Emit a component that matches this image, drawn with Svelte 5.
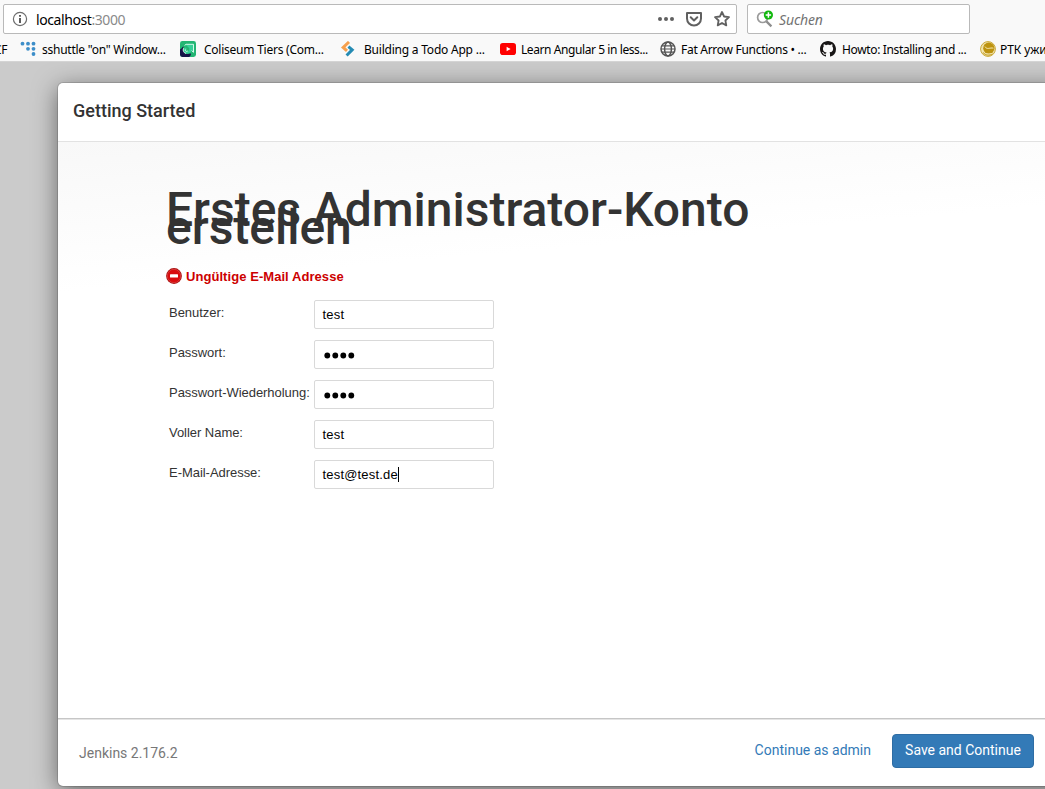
<script>
  const bookmarks = [
    { icon: 'dots', text: 'sshuttle "on" Window...', lead: 6, spacing: -0.25 },
    { icon: 'arrow', text: 'Coliseum Tiers (Com...', lead: 8, spacing: -0.24 },
    { icon: 'todo', text: 'Building a Todo App ...', lead: 8, spacing: -0.22 },
    { icon: 'youtube', text: 'Learn Angular 5 in less...', lead: 5, spacing: -0.42 },
    { icon: 'globe', text: 'Fat Arrow Functions • ...', lead: 5, spacing: -0.28 },
    { icon: 'github', text: 'Howto: Installing and ...', lead: 6, spacing: -0.35 },
    { icon: 'coin', text: 'РТК ужин', lead: 4, spacing: -0.1 }
  ];
  const fields = [
    { label: 'Benutzer:', value: 'test' },
    { label: 'Passwort:', value: '••••', secret: true },
    { label: 'Passwort-Wiederholung:', value: '••••', secret: true },
    { label: 'Voller Name:', value: 'test' },
    { label: 'E-Mail-Adresse:', value: 'test@test.de', focused: true }
  ];
</script>

<div class="window">
  <header class="chrome">
    <div class="nav">
      <div class="address">
        <svg class="info" width="16" height="16" viewBox="0 0 16 16">
          <circle cx="8" cy="8" r="6.6" fill="none" stroke="#6d6d6d" stroke-width="1.2" />
          <path d="M7 4h2v1.8H7zM7 7h2v5H7z" fill="#5c5c5c" />
        </svg>
        <span class="url">localhost<span class="port">:3000</span></span>
        <div class="actions">
          <svg width="18" height="18" viewBox="0 0 18 18" fill="#606060">
            <circle cx="3" cy="9" r="2" /><circle cx="9" cy="9" r="2" /><circle cx="15" cy="9" r="2" />
          </svg>
          <svg width="18" height="18" viewBox="0 0 18 18" fill="none" stroke="#606060" stroke-width="2" stroke-linecap="round" stroke-linejoin="round">
            <path d="M2 3h14v5.5a7 7 0 0 1-14 0z" /><path d="M5.7 7.3 9 10.5l3.3-3.2" />
          </svg>
          <svg width="18" height="18" viewBox="0 0 18 18" fill="none" stroke="#606060" stroke-width="1.8" stroke-linejoin="round">
            <path d="m9 2 2.1 4.5 4.9.6-3.6 3.4.9 4.9L9 13l-4.3 2.4.9-4.9L2 7.1l4.9-.6z" />
          </svg>
        </div>
      </div>
      <div class="search">
        <svg width="18" height="18" viewBox="0 0 18 18">
          <circle cx="6.6" cy="7.5" r="5" fill="none" stroke="#9a9a9a" stroke-width="1.7" />
          <path d="m10.4 11.4 5 5" stroke="#8d8d8d" stroke-width="2.2" />
          <circle cx="12.4" cy="5" r="4.6" fill="#12b80e" />
          <path d="M12.4 2.3v5.4M9.7 5h5.4" stroke="#fff" stroke-width="1.5" />
        </svg>
        <span>Suchen</span>
      </div>
    </div>

    <div class="bookmarks">
      <span class="cut">CF</span>
      {#each bookmarks as b}
        <div class="bookmark">
          <svg width="16" height="16" viewBox="0 0 16 16">
            {#if b.icon === 'dots'}
              <g fill="#3d8ec9">
                <circle cx="2.5" cy="2.7" r="1.9" /><circle cx="8" cy="2.7" r="1.9" /><circle cx="13.5" cy="2.7" r="1.9" />
                <circle cx="8" cy="7.8" r="1.9" /><circle cx="13.5" cy="7.8" r="1.9" /><circle cx="13.5" cy="13" r="1.9" />
              </g>
            {:else if b.icon === 'arrow'}
              <rect width="16" height="16" rx="2.4" fill="#22b573" />
              <path d="M0 8c1 1 2-2 3.5-2.5L3 9l3 4 5-.5c0 2-1 3-2 3.5H2.4A2.4 2.4 0 0 1 0 13.6z" fill="#171347" />
              <path d="M5.2 3.3h8.3v8l-1.9-1.7c-.8 2.6-3.6 3.8-5.8 2.9-2.7-1.1-3-4.8-.4-6.1L7 7.9c-1.6.6-1.5 2.4-.1 2.5 1.7.1 3-1.7 2.2-3.4z" fill="#35cf97" />
              <path d="m4.6 4.4 1.5-1.1h7.4v8l-1.9-1.7M3.5 7.2c-1 2.4.2 4.8 2.5 5.2M5.4 8.5c-.5 1.6 1 2.3 2.4 1.5" fill="none" stroke="#e8fff5" stroke-width=".9" />
            {:else if b.icon === 'todo'}
              <path d="M9 1 3.2 6.4 7 9.8" fill="none" stroke="#f6a04d" stroke-width="3" />
              <path d="m8.4 5.6 3.8 3.2L6.6 14.5" fill="none" stroke="#258bb3" stroke-width="3" />
            {:else if b.icon === 'youtube'}
              <rect y="2" width="16" height="12" rx="2.8" fill="#f00" />
              <path d="m6.6 5.8 4 2.2-4 2.2z" fill="#fff" />
            {:else if b.icon === 'globe'}
              <g fill="none" stroke="#555" stroke-width="1.5">
                <circle cx="8" cy="8" r="7" /><ellipse cx="8" cy="8" rx="3.4" ry="7" />
                <path d="M2 4.8h12M1 8h14M2 11.2h12" stroke-width="1.2" />
              </g>
            {:else if b.icon === 'github'}
              <path fill="#181616" d="M8 0C3.58 0 0 3.58 0 8c0 3.54 2.29 6.53 5.47 7.59.4.07.55-.17.55-.38 0-.19-.01-.82-.01-1.49-2.01.37-2.53-.49-2.69-.94-.09-.23-.48-.94-.82-1.13-.28-.15-.68-.52-.01-.53.63-.01 1.08.58 1.23.82.72 1.21 1.87.87 2.33.66.07-.52.28-.87.51-1.07-1.78-.2-3.64-.89-3.64-3.95 0-.87.31-1.59.82-2.15-.08-.2-.36-1.02.08-2.12 0 0 .67-.21 2.2.82.64-.18 1.32-.27 2-.27s1.36.09 2 .27c1.53-1.04 2.2-.82 2.2-.82.44 1.1.16 1.92.08 2.12.51.56.82 1.27.82 2.15 0 3.07-1.87 3.75-3.65 3.95.29.25.54.73.54 1.48 0 1.07-.01 1.93-.01 2.2 0 .21.15.46.55.38A8.01 8.01 0 0 0 16 8c0-4.42-3.58-8-8-8z" />
            {:else}
              <circle cx="8" cy="8" r="7.4" fill="#f1e3ac" stroke="#cba938" stroke-width="1" />
              <circle cx="8.8" cy="7.2" r="5.6" fill="#bd9310" />
              <path d="M5 5.6c2 3.6 5 .6 8.4 1.6M1.6 7.5c1 4.5 5.5 6.7 10 5" fill="none" stroke="#f7e9b2" stroke-width="1" />
              <path d="M3 11.5c2.6 3 6.5 3.3 9.5 1.5" fill="none" stroke="#c09a20" stroke-width="1" />
            {/if}
          </svg>
          <span style="margin-left: {b.lead}px; letter-spacing: {b.spacing}px">{b.text}</span>
        </div>
      {/each}
    </div>
  </header>

  <main class="backdrop">
    <section class="dialog">
      <div class="title">Getting Started</div>
      <div class="content">
        <h1>Erstes Administrator-Konto<br />erstellen</h1>
        <div class="error">
          <svg width="16" height="16" viewBox="0 0 16 16">
            <circle cx="8" cy="8" r="7.9" fill="#a80f0f" />
            <circle cx="8" cy="8" r="6.7" fill="#d90b0d" stroke="#e04848" stroke-width=".7" />
            <rect x="4" y="6.2" width="8" height="3.2" rx=".5" fill="#fff" />
          </svg>
          <span>Ungültige E-Mail Adresse</span>
        </div>
        <div class="form">
          {#each fields as f}
            <div class="row">
              <span class="label">{f.label}</span>
              <div class="input">
                {#if f.secret}
                  <svg width="34" height="8" viewBox="0 0 34 8">
                    <circle cx="4.3" cy="4.5" r="2.9" /><circle cx="12.3" cy="4.5" r="2.9" /><circle cx="20.3" cy="4.5" r="2.9" /><circle cx="28.3" cy="4.5" r="2.9" />
                  </svg>
                {:else}
                  <span>{f.value}</span>
                {/if}
                {#if f.focused}<i class="caret"></i>{/if}
              </div>
            </div>
          {/each}
        </div>
      </div>
      <footer>
        <span class="version">Jenkins 2.176.2</span>
        <span class="link">Continue as admin</span>
        <button>Save and Continue</button>
      </footer>
    </section>
  </main>
</div>

<style>
  :global(body) { margin: 0; overflow: hidden; }
  .window {
    width: 1045px; height: 789px; overflow: hidden;
    display: flex; flex-direction: column;
    font-family: Roboto, sans-serif; color: #333;
  }
  .window * { box-sizing: border-box; }
  svg { display: block; flex: none; }
  .chrome {
    height: 62px; flex: none; background: #f9f9f9; border-bottom: 1px solid #d4d4d4;
    padding-top: 4px; font-family: "Noto Sans", "Open Sans", sans-serif; color: #000;
  }
  .nav { display: flex; gap: 10px; padding-left: 3px; }
  .address, .search {
    height: 30px; background: #fff; border: 1px solid #b9b9b9; border-radius: 2px;
    display: flex; align-items: center;
  }
  .address { width: 734px; padding: 0 5px 0 8px; }
  .url { margin-left: 8px; font-size: 14px; letter-spacing: -.42px; }
  .port { color: #8a8a8a; }
  .actions { margin-left: auto; display: flex; gap: 10px; }
  .search { width: 223px; padding-left: 8px; font-size: 14px; font-style: italic; color: #737373; }
  .search span { margin-left: 5px; letter-spacing: -.15px; }
  .bookmarks { display: flex; height: 27px; padding-top: 3px; align-items: center; font-size: 12px; white-space: nowrap; }
  .cut { width: 20px; flex: none; margin-left: -6px; margin-right: 6px; padding-top: 1px; letter-spacing: -.3px; }
  .bookmark { width: 160px; flex: none; display: flex; align-items: center; }
  .bookmark span { padding-top: 1px; }
  .backdrop { flex: 1; background: #cbcbcb; padding: 21px 0 0 58px; overflow: hidden; }
  .dialog {
    width: 1010px; height: 703px; background: #fff; border-radius: 5px;
    box-shadow: 0 0 0 1px rgba(0,0,0,.13), 0 5px 24px rgba(0,0,0,.5);
    display: flex; flex-direction: column;
  }
  .title {
    height: 59px; border-bottom: 1px solid #e2e2e2; padding: 0 15px 3px;
    display: flex; align-items: center; font-size: 18px; font-weight: 500;
  }
  .content {
    flex: 1; padding: 59px 0 0 108px;
    background: linear-gradient(175deg, #f8f8f8, #fff 150px);
  }
  h1 { margin: 0; font-size: 48px; line-height: 18px; font-weight: 500; white-space: nowrap; letter-spacing: -.02px; }
  .error {
    margin-top: 31px; height: 17px; display: flex; align-items: flex-start; gap: 4px;
    font: bold 13px/17px "Liberation Sans", Arial, sans-serif; letter-spacing: .06px; color: #c00;
  }
  .form { margin-top: 15px; font: 13px "Liberation Sans", Arial, sans-serif; }
  .row { display: flex; height: 40px; }
  .label { width: 148px; padding: 5px 0 0 3px; white-space: nowrap; letter-spacing: -.04px; }
  .input {
    width: 180px; height: 29px; border: 1px solid #d9d9d9; border-radius: 2px; background: #fff;
    display: flex; align-items: center; padding: 0 7.5px; color: #000; letter-spacing: .18px;
  }
  .caret { width: 1px; height: 15px; background: #000; }
  footer {
    height: 68px; flex: none; border-top: 1px solid #c6c6c6; box-shadow: inset 0 1px #e5e5e5;
    display: flex; align-items: center; padding: 0 34px 3px 21px; font-size: 14px;
  }
  .version { color: #777; padding-top: 3px; }
  .link { margin-left: auto; color: #337ab7; padding-bottom: 2px; }
  button {
    margin-left: 21px; width: 142px; height: 34px; padding: 0 0 2px; border: 1px solid #2e6da4; border-radius: 4px;
    background: #337ab7; color: #fff; font: 14px Roboto, sans-serif;
  }
</style>
